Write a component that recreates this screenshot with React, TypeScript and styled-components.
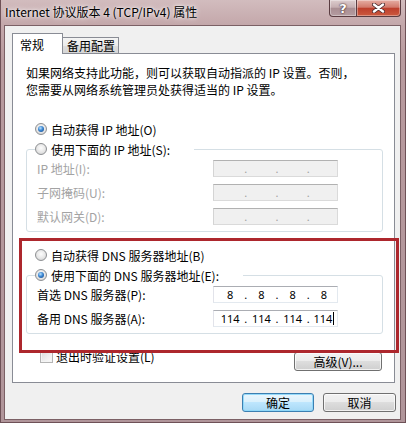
import styled, { createGlobalStyle } from "styled-components";

const GlobalStyle = createGlobalStyle`
  html, body {
    margin: 0;
    padding: 0;
    background: #a98b90;
  }
  body {
    font-family: "Noto Sans CJK SC", "Noto Sans", sans-serif;
    font-size: 12px;
    color: #000;
  }
`;

const Window = styled.div`
  position: relative;
  width: 406px;
  height: 423px;
  box-sizing: border-box;
  display: flex;
  flex-direction: column;
  padding: 0 5px 3px 4px;
  background: linear-gradient(180deg, #d2bcbe 0px, #c4a8ab 24px, #b89a9e 60px, #b0959a 100%);
  box-shadow: inset 1px 0 0 #6e5157, inset -1px 0 0 #6e5157, inset 0 -1px 0 #6e5157;
`;

const TitleBar = styled.div`
  height: 25px;
  display: flex;
  justify-content: space-between;
  align-items: flex-start;
  flex-shrink: 0;
`;

const TitleText = styled.div`
  padding-left: 1px;
  line-height: 24px;
  font-size: 12px;
  color: #000;
  text-shadow: 0 0 6px #fff, 0 0 3px rgba(255, 255, 255, 0.9);
  white-space: nowrap;
`;

const CaptionGroup = styled.div`
  display: flex;
`;

const CaptionButton = styled.div<{ $close?: boolean }>`
  width: ${(p) => (p.$close ? 44 : 28)}px;
  height: 17px;
  box-sizing: border-box;
  display: flex;
  align-items: center;
  justify-content: center;
  border: 1px solid #5a3c41;
  border-top: none;
  ${(p) => (p.$close ? "border-left: none;" : "")}
  border-radius: ${(p) => (p.$close ? "0 0 4px 0" : "0 0 0 4px")};
  background: ${(p) =>
    p.$close
      ? "linear-gradient(180deg, #e6aea4 0%, #d27a6c 45%, #bd3f2c 52%, #cc5a3f 100%)"
      : "linear-gradient(180deg, #ddcdce 0%, #c6afb2 45%, #a98e93 52%, #b59ca0 100%)"};
  box-shadow: inset 0 0 0 1px rgba(255, 255, 255, 0.35);
  color: #fff;
  font: bold 13px "DejaVu Sans", sans-serif;
  text-shadow: 0 0 2px #3a2226, 0 0 1px #3a2226;
`;

const Client = styled.div`
  flex: 1;
  display: flex;
  flex-direction: column;
  border: 1px solid #7b6065;
  background: #f0f0f0;
  padding: 7px 5px 7px 7px;
`;

const TabRow = styled.div`
  display: flex;
  align-items: flex-end;
  height: 20px;
`;

const Tab = styled.div<{ $active?: boolean }>`
  position: relative;
  box-sizing: border-box;
  display: flex;
  align-items: center;
  border: 1px solid #898c95;
  ${(p) =>
    p.$active
      ? `
    z-index: 1;
    width: 51px;
    height: 21px;
    margin-bottom: -1px;
    padding-left: 7px;
    border-bottom: none;
    background: #fff;
  `
      : `
    width: 56px;
    height: 16px;
    padding-left: 4px;
    border-left: none;
    border-bottom: none;
    background: linear-gradient(180deg, #f4f4f4 0%, #ebebeb 50%, #dedede 50%, #d6d6d6 100%);
  `}
`;

const Panel = styled.div`
  display: flex;
  flex-direction: column;
  border: 1px solid #898c95;
  background: #fff;
  padding: 10px 11px 11px 13px;
`;

const Description = styled.p`
  margin: 0;
  line-height: 17px;
`;

const RadioRow = styled.div<{ $gap?: number }>`
  display: flex;
  align-items: center;
  height: 20px;
  margin-top: ${(p) => p.$gap ?? 0}px;
  padding-left: ${(p) => (p.$gap !== undefined ? 9 : 0)}px;
  white-space: nowrap;
`;

const Radio = styled.span<{ $checked?: boolean }>`
  position: relative;
  width: 12px;
  height: 12px;
  box-sizing: border-box;
  margin-right: 4px;
  border-radius: 50%;
  border: 1px solid #8d8f92;
  background: radial-gradient(circle at 50% 40%, #fdfdfd 0%, #e6e6e6 55%, #c9cacc 100%);
  flex-shrink: 0;

  &::after {
    content: "";
    display: ${(p) => (p.$checked ? "block" : "none")};
    position: absolute;
    left: 2px;
    top: 2px;
    width: 6px;
    height: 6px;
    border-radius: 50%;
    background: radial-gradient(circle at 40% 35%, #b9e3ff 0%, #3b86d2 45%, #14427f 100%);
  }
`;

const Group = styled.fieldset`
  margin: 0;
  min-inline-size: 0;
  border: 1px solid #d5dfe5;
  border-radius: 3px;
  padding: 1px 10px 6px 8px;
`;

const Legend = styled.legend`
  margin: 0;
  padding: 0 24px 0 0;
`;

const FieldGrid = styled.div`
  display: grid;
  grid-template-columns: 178px 125px;
  row-gap: 7px;
  align-items: center;
`;

const FieldLabel = styled.div<{ $disabled?: boolean }>`
  padding-left: 2px;
  color: ${(p) => (p.$disabled ? "#a3a3a3" : "#000")};
  white-space: nowrap;
`;

const IpBox = styled.div<{ $disabled?: boolean }>`
  height: 17px;
  box-sizing: border-box;
  display: flex;
  align-items: center;
  padding-left: 3px;
  border: 1px solid;
  border-color: ${(p) =>
    p.$disabled ? "#b1b1b1 #dadada #dadada #d4d4d4" : "#abadb3 #e3e9ef #e3e9ef #e2e3ea"};
  background: ${(p) => (p.$disabled ? "#f0f0f0" : "#fff")};
  font-family: "Noto Sans", "Liberation Sans", sans-serif;
  font-size: 11px;
  color: ${(p) => (p.$disabled ? "#a0a0a0" : "#000")};
`;

const Segment = styled.span`
  width: 27px;
  display: flex;
  justify-content: center;
  align-items: center;
`;

const Dot = styled.span`
  width: 5px;
  text-align: center;
`;

const Caret = styled.span`
  width: 1px;
  height: 13px;
  margin-left: 1px;
  background: #000;
`;

const BottomRow = styled.div`
  display: flex;
  justify-content: space-between;
  align-items: flex-start;
  margin-top: 16px;
  padding-left: 14px;
  margin-right: 1px;
`;

const CheckLabel = styled.label`
  display: flex;
  align-items: center;
  height: 13px;
  gap: 3px;
  white-space: nowrap;
`;

const CheckBox = styled.span`
  width: 13px;
  height: 13px;
  box-sizing: border-box;
  border: 1px solid #b4b4b4;
  background: linear-gradient(135deg, #dcdcdc 0%, #f0f0f0 60%, #fbfbfb 100%);
  box-shadow: inset 0 0 0 1px #f4f4f4;
`;

const Button = styled.button<{ $primary?: boolean; $w: number; $top?: number }>`
  width: ${(p) => p.$w}px;
  height: 19px;
  margin-top: ${(p) => p.$top ?? 0}px;
  padding: 0;
  box-sizing: border-box;
  border-radius: 3px;
  border: 1px solid ${(p) => (p.$primary ? "#3c7fb1" : "#707070")};
  background: ${(p) =>
    p.$primary
      ? "linear-gradient(180deg, #eaf6fd 0%, #d9f0fc 50%, #bee6fd 50%, #a7d9f5 100%)"
      : "linear-gradient(180deg, #f2f2f2 0%, #ebebeb 50%, #dddddd 50%, #cfcfcf 100%)"};
  box-shadow: inset 0 0 0 1px ${(p) => (p.$primary ? "rgba(140, 215, 250, 0.9)" : "rgba(255, 255, 255, 0.7)")};
  font-family: "Noto Sans CJK SC", "Noto Sans", sans-serif;
  font-size: 12px;
  line-height: 17px;
  color: #000;
`;

const DialogButtons = styled.div`
  display: flex;
  justify-content: flex-end;
  gap: 9px;
  margin-top: auto;
  margin-right: -1px;
`;

const Highlight = styled.div`
  position: absolute;
  left: 19px;
  top: 238px;
  width: 380px;
  height: 115px;
  box-sizing: border-box;
  border: 3px solid #ad272d;
  pointer-events: none;
`;

const IpField = ({ parts, disabled, caret }: { parts: string[]; disabled?: boolean; caret?: boolean }) => (
  <IpBox $disabled={disabled}>
    {parts.map((part, i) => (
      <>
        {i > 0 && <Dot>.</Dot>}
        <Segment>
          {part}
          {caret && i === parts.length - 1 && <Caret />}
        </Segment>
      </>
    ))}
  </IpBox>
);

const HelpGlyph = () => <span>?</span>;

const CloseGlyph = () => (
  <svg width="13" height="10" viewBox="0 0 13 10">
    <path d="M2 1.5 L11 8.5 M11 1.5 L2 8.5" stroke="#4a2a2e" strokeWidth="4" strokeLinecap="round" />
    <path d="M2 1.5 L11 8.5 M11 1.5 L2 8.5" stroke="#fff" strokeWidth="2.4" strokeLinecap="round" />
  </svg>
);

export default function App() {
  const empty = ["", "", "", ""];
  return (
    <>
      <GlobalStyle />
      <Window>
        <TitleBar>
          <TitleText>Internet 协议版本 4 (TCP/IPv4) 属性</TitleText>
          <CaptionGroup>
            <CaptionButton>
              <HelpGlyph />
            </CaptionButton>
            <CaptionButton $close>
              <CloseGlyph />
            </CaptionButton>
          </CaptionGroup>
        </TitleBar>
        <Client>
          <TabRow>
            <Tab $active>常规</Tab>
            <Tab>备用配置</Tab>
          </TabRow>
          <Panel>
            <Description>
              如果网络支持此功能，则可以获取自动指派的 IP 设置。否则，
              <br />
              您需要从网络系统管理员处获得适当的 IP 设置。
            </Description>

            <RadioRow $gap={21}>
              <Radio $checked />
              自动获得 IP 地址(O)
            </RadioRow>
            <Group>
              <Legend>
                <RadioRow>
                  <Radio />
                  使用下面的 IP 地址(S):
                </RadioRow>
              </Legend>
              <FieldGrid>
                <FieldLabel $disabled>IP 地址(I):</FieldLabel>
                <IpField parts={empty} disabled />
                <FieldLabel $disabled>子网掩码(U):</FieldLabel>
                <IpField parts={empty} disabled />
                <FieldLabel $disabled>默认网关(D):</FieldLabel>
                <IpField parts={empty} disabled />
              </FieldGrid>
            </Group>

            <RadioRow $gap={13}>
              <Radio />
              自动获得 DNS 服务器地址(B)
            </RadioRow>
            <Group>
              <Legend>
                <RadioRow>
                  <Radio $checked />
                  使用下面的 DNS 服务器地址(E):
                </RadioRow>
              </Legend>
              <FieldGrid>
                <FieldLabel>首选 DNS 服务器(P):</FieldLabel>
                <IpField parts={["8", "8", "8", "8"]} />
                <FieldLabel>备用 DNS 服务器(A):</FieldLabel>
                <IpField parts={["114", "114", "114", "114"]} caret />
              </FieldGrid>
            </Group>

            <BottomRow>
              <CheckLabel>
                <CheckBox />
                退出时验证设置(L)
              </CheckLabel>
              <Button $w={88} $top={2}>
                高级(V)...
              </Button>
            </BottomRow>
          </Panel>
          <DialogButtons>
            <Button $primary $w={72}>
              确定
            </Button>
            <Button $w={73}>取消</Button>
          </DialogButtons>
        </Client>
        <Highlight />
      </Window>
    </>
  );
}
